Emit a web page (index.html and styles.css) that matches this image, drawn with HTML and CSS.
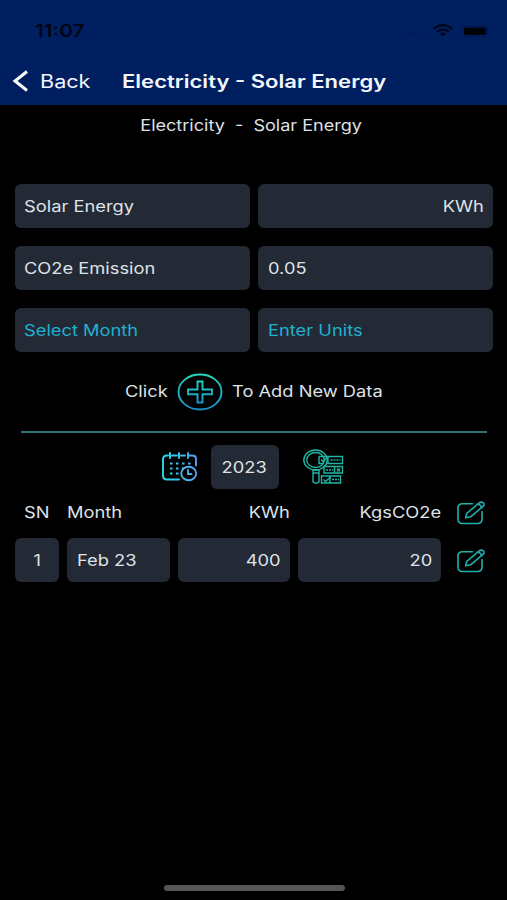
FILE: index.html
```html
<!DOCTYPE html>
<html lang="en">
<head>
<meta charset="utf-8">
<title>Electricity - Solar Energy</title>
<link rel="stylesheet" href="styles.css">
</head>
<body>
<svg class="defs" width="0" height="0" aria-hidden="true">
  <defs>
    <linearGradient id="teal" x1="0" y1="0" x2="0" y2="1"><stop offset="0" stop-color="#20d8bd"/><stop offset="1" stop-color="#1593cf"/></linearGradient>
    <linearGradient id="sky" gradientUnits="userSpaceOnUse" x1="0" y1="0" x2="35" y2="0"><stop offset="0" stop-color="#22dfea"/><stop offset="1" stop-color="#5a9cf2"/></linearGradient>
    <symbol id="edit" viewBox="0 0 28 24">
      <g fill="none" stroke="#22aeab" stroke-width="1.6" stroke-linejoin="round" stroke-linecap="round">
        <path d="M15.5 2.700H5.5Q1 2.700 1 7V18Q1 22.500 5.500 22.500H20.500Q25 22.500 25 18V10.500"/>
        <path d="M8.600 16.800L9.800 12.300L22.200 1.900Q24.200 0.300 26.200 1.900Q28 3.600 26 5.400L13.600 15.800Z"/>
        <path d="M20.800 3.200Q23.800 3.500 24.700 6.500"/>
      </g>
    </symbol>
  </defs>
</svg>
<div class="screen">
  <header class="header">
    <div class="status">
      <span class="t time">11:07</span>
      <svg class="status-icons" width="84" height="16" viewBox="0 0 84 16">
        <path d="M0 10.500h4M7 11h4M14 10.500h4" stroke="#001548" stroke-width="1"/>
        <g fill="none" stroke="#010514" stroke-width="2"><path d="M28.500 5.800Q38 -1.500 47.500 5.800"/><path d="M32 8.700Q38 4.200 44 8.700"/></g>
        <path d="M34.800 10.700Q38 8.400 41.200 10.700L38 13.200Z" fill="#010514"/>
        <rect x="57.500" y="3" width="25" height="10.500" rx="3" fill="none" stroke="#00164e"/>
        <rect x="59" y="4.500" width="22" height="7.500" rx="1.500" fill="#00020a"/>
      </svg>
    </div>
    <nav class="nav">
      <svg class="chevron" width="16" height="22" viewBox="0 0 16 22"><path d="M15 1.500L3 11L15 20.500" fill="none" stroke="#fff" stroke-width="3"/></svg>
      <span class="t back">Back</span>
      <span class="t title">Electricity - Solar Energy</span>
    </nav>
  </header>
  <main>
    <p class="subtitle"><span class="t sub">Electricity&nbsp; -&nbsp; Solar Energy</span></p>
    <section class="fields">
      <div class="box"><span class="t">Solar Energy</span></div>
      <div class="box end"><span class="t">KWh</span></div>
      <div class="box"><span class="t">CO2e Emission</span></div>
      <div class="box"><span class="t">0.05</span></div>
      <div class="box hint"><span class="t">Select Month</span></div>
      <div class="box hint"><span class="t">Enter Units</span></div>
    </section>
    <section class="add">
      <span class="slot click"><span class="t">Click</span></span>
      <svg width="46" height="38" viewBox="0 0 46 38"><g fill="none" stroke="url(#teal)"><ellipse cx="23" cy="19" rx="21.500" ry="17.500" stroke-width="1.900"/><path d="M20.500 8.500H25.500V16.500H35V21.300H25.500V29.500H20.500V21.300H11V16.500H20.500Z" stroke-width="1.900"/></g></svg>
      <span class="slot"><span class="t">To Add New Data</span></span>
    </section>
    <div class="rule"></div>
    <section class="filter">
      <svg class="calendar" width="36" height="30" viewBox="0 0 36 30">
        <g fill="none" stroke="url(#sky)" stroke-width="1.900" stroke-linecap="round">
          <path d="M17 27.500H5Q1 27.500 1 23.500V7Q1 3.500 5 3.500H6M10 3.500H15M19 3.500H23M27 3.500H30Q34 3.500 34 7V13.500"/>
          <path d="M8 1V6M17 1V6M26 1V6" stroke-width="2"/>
          <ellipse cx="26.700" cy="21.500" rx="7.500" ry="6.700"/>
          <path d="M26 18V22H29.500"/>
        </g>
        <path d="M8 11.500H30M8 16.500H22M8 21.500H18" fill="none" stroke="url(#sky)" stroke-width="2" stroke-dasharray="2.500 3.500"/>
      </svg>
      <div class="box year"><span class="t">2023</span></div>
      <svg class="search" width="42" height="36" viewBox="0 0 42 36">
        <g fill="none" stroke="#1fb5a4" stroke-width="1.400">
          <ellipse cx="12.500" cy="11" rx="11.700" ry="10"/><ellipse cx="12.500" cy="11" rx="8.800" ry="7.500"/>
          <path d="M10 21H16V33Q13 35.500 10 33ZM10 24H16"/>
          <path d="M16 7.500H39.500V14.500H23M16 7.500V14.500H21M25 7.500V14.500M21 17.500H39.500V24H21ZM31.500 17.500V24M18.500 27H37.500V34H18.500ZM27 27V34"/>
          <path d="M18 10.500L20 12.500L24 8.500M20.500 30.500L22.500 32.500L27.500 28M34 19.500L37 22.500M37 19.500L34 22.500"/>
          <path d="M27.500 11H37.500M23 21H30M29 30.500H36" stroke-dasharray="2 1" stroke-width="1.500"/>
        </g>
      </svg>
    </section>
    <section class="grid head">
      <span class="cell sn"><span class="t">SN</span></span>
      <span class="cell"><span class="t">Month</span></span>
      <span class="cell end"><span class="t">KWh</span></span>
      <span class="cell end"><span class="t">KgsCO2e</span></span>
      <svg class="edit" width="28" height="24"><use href="#edit"/></svg>
    </section>
    <section class="grid">
      <div class="box mid"><span class="t">1</span></div>
      <div class="box"><span class="t">Feb 23</span></div>
      <div class="box end"><span class="t">400</span></div>
      <div class="box end"><span class="t">20</span></div>
      <svg class="edit" width="28" height="24"><use href="#edit"/></svg>
    </section>
  </main>
  <div class="home"></div>
</div>
</body>
</html>
```
FILE: styles.css
```css
* { box-sizing: border-box; }
body { margin: 0; background: #000; }
.defs { display: block; position: absolute; }
.screen {
  width: 507px; height: 900px; overflow: hidden;
  display: flex; flex-direction: column;
  background: #000; color: #dfe2e7;
  font: 400 15.5px/20px Inter, "Liberation Sans", sans-serif;
}
.t { display: inline-block; white-space: pre; transform: scaleX(1.18); transform-origin: left center; }
.end .t { transform-origin: right center; }
.mid .t, .year .t, .sub { transform-origin: center; }
.sub { transform: scaleX(1.165); }
svg { display: block; flex: none; }

.header { height: 105px; background: #001f60; color: #f4f6fc; }
.status { height: 57px; padding: 5px 18px 0 35px; display: flex; align-items: center; justify-content: space-between; }
.time { color: #010514; font-size: 17px; font-weight: 600; transform: scaleX(1.22); }
.nav { height: 48px; padding: 1px 0 0 12px; display: grid; grid-template-columns: 28px 82px auto; align-items: center; }
.chevron { margin-bottom: 2px; }
.back { font-size: 18px; transform: scaleX(1.2); }
.title { font-size: 18px; font-weight: 600; transform: scaleX(1.225); }

main { flex: 1; }
.subtitle { margin: 11px 0 0; padding: 0 5px 0 0; height: 67.5px; text-align: center; }
.fields { margin: 0 14px 0 14.5px; display: grid; grid-template-columns: 235px 235px; grid-auto-rows: 44px; gap: 18px 8.5px; }
.box { height: 44px; padding: 2px 9px 0 9.5px; border-radius: 6px; background: #232a35; display: flex; align-items: center; }
.end { justify-content: flex-end; }
.mid, .year { justify-content: center; }
.hint { color: #20b0d2; }
.add { height: 79.5px; padding: 1px 0 0 125px; display: flex; align-items: center; }
.click { width: 52px; }
.add svg { margin-right: 9px; }
.rule { margin: 0 20px 0 21px; height: 2px; background: #2d7274; }
.filter { margin-top: 12px; padding-left: 162px; display: flex; align-items: center; }
.year { width: 68px; margin: 0 24px 0 13px; padding: 1px 9px 0 7px; }
.grid { margin-left: 14.5px; display: grid; grid-template-columns: 44.5px 103px 112px 143px 28px; column-gap: 8px; align-items: center; }
.head { height: 49px; padding-bottom: 2px; }
.cell { display: flex; }
.sn { padding-left: 9.5px; }
.grid .edit { margin-left: 7.5px; }
.grid:not(.head) .edit { margin-top: 1px; }
.home { width: 181px; height: 6px; margin: 0 0 9px 163.5px; border-radius: 3px; background: #555; }
```
